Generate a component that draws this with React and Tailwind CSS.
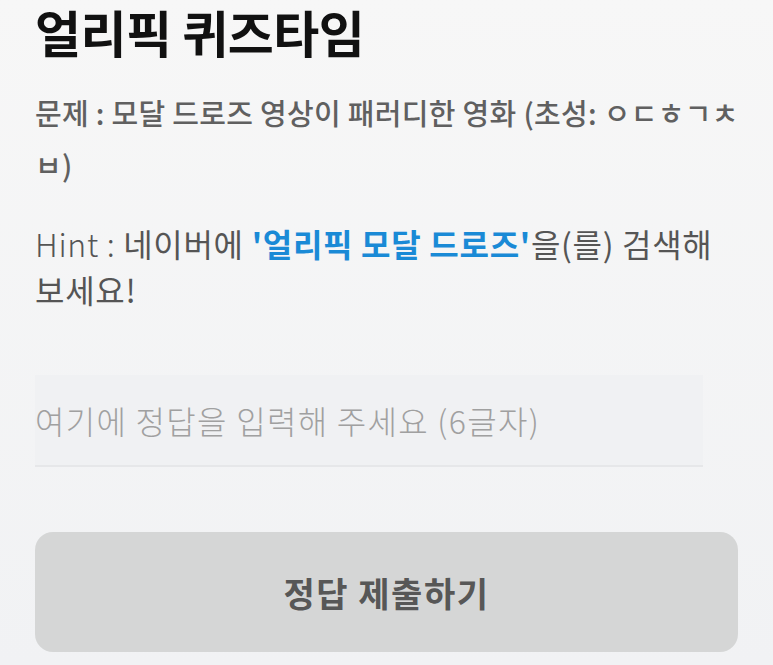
import React from "react";

export default function App() {
  const font = { fontFamily: '"Noto Sans CJK KR", "Noto Sans", sans-serif' };
  return (
    <div
      className="w-[773px] h-[665px] overflow-hidden bg-gradient-to-b from-[#f7f7f7] to-[#f1f2f4] px-[35px] flex flex-col"
      style={font}
    >
      <h1 className="text-[50px] font-bold leading-[62px] text-[#111] tracking-[-0.5px]">
        얼리픽 퀴즈타임
      </h1>
      <p className="mt-[24px] -mr-[10px] text-[29px] leading-[52px] text-[#606060] font-medium tracking-[0.3px]">
        문제 : 모달 드로즈 영상이 패러디한 영화 (초성: ㅇㄷㅎㄱㅊㅂ)
      </p>
      <p className="mt-[30px] text-[32px] leading-[46px] text-[#555] tracking-[0.7px]">
        <span className="font-light">Hint : </span>
        <span>네이버에 </span>
        <span className="font-bold text-[#1a8ad6]">'얼리픽 모달 드로즈'</span>
        <span>을(를) 검색해 보세요!</span>
      </p>
      <div className="mt-[63px] w-[668px] h-[92px] bg-[#f0f1f3] border-b-2 border-[#e6e7e9] flex items-center">
        <input
          className="w-full bg-transparent outline-none text-[32px] tracking-[1.3px] text-[#333] placeholder:text-[#a0a0a0] font-light"
          placeholder="여기에 정답을 입력해 주세요 (6글자)"
          style={font}
        />
      </div>
      <button
        className="mt-[65px] h-[120px] w-full rounded-[18px] bg-[#d5d6d6] text-[34px] tracking-[1.5px] font-bold text-[#575757]"
        style={font}
      >
        정답 제출하기
      </button>
    </div>
  );
}
